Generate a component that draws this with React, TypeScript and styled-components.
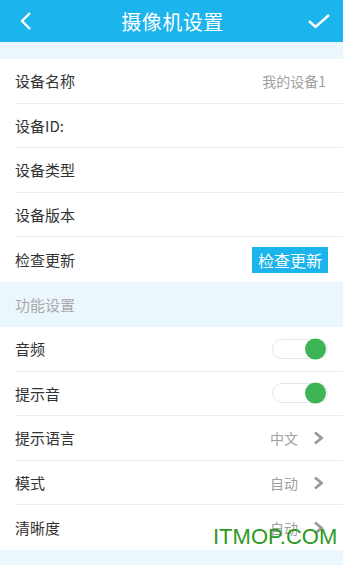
import React from "react";
import styled, { createGlobalStyle } from "styled-components";

const Global = createGlobalStyle`
  html, body { margin: 0; padding: 0; background: #fff; }
  body { font-family: "Noto Sans CJK SC", "Noto Sans", sans-serif; }
  * { box-sizing: border-box; }
`;

const Page = styled.div`
  position: relative;
  width: 343px;
  height: 565px;
  overflow: hidden;
  background: #eaf7fd;
  display: flex;
  flex-direction: column;
`;

const Header = styled.div`
  height: 42px;
  background: #1bb4ec;
  display: flex;
  align-items: center;
  justify-content: space-between;
  padding: 0 12px 0 14px;
  flex-shrink: 0;
`;

const Title = styled.div`
  color: #fff;
  font-size: 20px;
  letter-spacing: 0.5px;
`;

const IconBtn = styled.div`
  width: 24px;
  height: 24px;
  display: flex;
  align-items: center;
  justify-content: center;
`;

const Band = styled.div<{ h: number }>`
  height: ${(p) => p.h}px;
  flex-shrink: 0;
  display: flex;
  align-items: center;
  padding-left: 15px;
  color: #a9a9a9;
  font-size: 15px;
`;

const Group = styled.div`
  background: #fff;
  display: flex;
  flex-direction: column;
`;

const Row = styled.div<{ last?: boolean }>`
  height: 44.6px;
  margin-left: 15px;
  padding-right: 17px;
  display: flex;
  align-items: center;
  justify-content: space-between;
  border-bottom: ${(p) => (p.last ? "none" : "1px solid #ececec")};
  flex-shrink: 0;
`;

const Label = styled.span`
  color: #333;
  font-size: 15px;
`;

const Value = styled.span`
  color: #a0a0a0;
  font-size: 14px;
  display: flex;
  align-items: center;
  gap: 13px;
`;

const UpdateBtn = styled.div`
  background: #1bb4ec;
  color: #fff;
  font-size: 16px;
  height: 26px;
  width: 76px;
  margin-right: -2px;
  display: flex;
  align-items: center;
  justify-content: center;
`;

const Toggle = styled.div`
  width: 56px;
  height: 20px;
  border-radius: 10px;
  border: 1px solid #e6e6e6;
  background: #fff;
  position: relative;
  margin-right: -2px;
`;

const Knob = styled.div`
  position: absolute;
  right: 1px;
  top: 50%;
  transform: translateY(-50%);
  width: 21px;
  height: 21px;
  border-radius: 50%;
  background: #3db554;
`;

const ChevronBox = styled.span`
  display: flex;
  margin-right: 1px;
`;

const Watermark = styled.div`
  position: absolute;
  left: 213px;
  top: 524px;
  font-family: "Liberation Sans", Arial, sans-serif;
  font-size: 22px;
  color: #2b9a22;
`;

const Chevron = () => (
  <ChevronBox>
    <svg width="14" height="14" viewBox="0 0 14 14">
      <path d="M4 1.5 L10.5 7 L4 12.5" fill="none" stroke="#9a9a9a" strokeWidth="2.8" />
    </svg>
  </ChevronBox>
);

export default function App() {
  return (
    <Page>
      <Global />
      <Header>
        <IconBtn>
          <svg width="14" height="20" viewBox="0 0 14 20">
            <path d="M11 2 L3 10 L11 18" fill="none" stroke="#fff" strokeWidth="2.4" />
          </svg>
        </IconBtn>
        <Title>摄像机设置</Title>
        <IconBtn>
          <svg width="24" height="16" viewBox="0 0 24 16">
            <path d="M2 8 L8.5 14 L22 2" fill="none" stroke="#fff" strokeWidth="2.4" />
          </svg>
        </IconBtn>
      </Header>
      <Band h={17} />
      <Group>
        <Row>
          <Label>设备名称</Label>
          <Value>我的设备1</Value>
        </Row>
        <Row>
          <Label>设备ID:</Label>
        </Row>
        <Row>
          <Label>设备类型</Label>
        </Row>
        <Row>
          <Label>设备版本</Label>
        </Row>
        <Row last>
          <Label>检查更新</Label>
          <UpdateBtn>检查更新</UpdateBtn>
        </Row>
      </Group>
      <Band h={45}>功能设置</Band>
      <Group>
        <Row>
          <Label>音频</Label>
          <Toggle>
            <Knob />
          </Toggle>
        </Row>
        <Row>
          <Label>提示音</Label>
          <Toggle>
            <Knob />
          </Toggle>
        </Row>
        <Row>
          <Label>提示语言</Label>
          <Value>
            中文 <Chevron />
          </Value>
        </Row>
        <Row>
          <Label>模式</Label>
          <Value>
            自动 <Chevron />
          </Value>
        </Row>
        <Row last>
          <Label>清晰度</Label>
          <Value>
            自动 <Chevron />
          </Value>
        </Row>
      </Group>
      <Watermark>ITMOP.COM</Watermark>
    </Page>
  );
}
